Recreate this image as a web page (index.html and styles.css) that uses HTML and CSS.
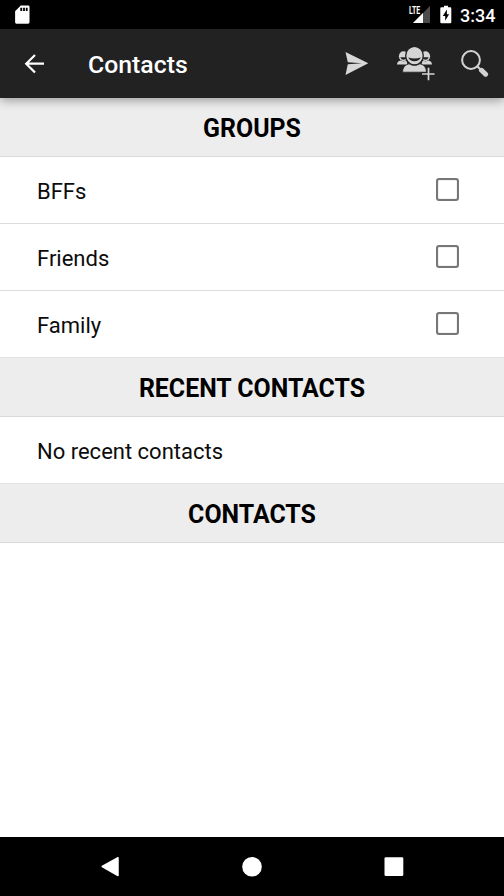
FILE: index.html
```html
<!DOCTYPE html>
<html lang="en">
<head>
<meta charset="utf-8">
<title>Contacts</title>
<link rel="stylesheet" href="styles.css">
</head>
<body>
<div class="screen">
  <div class="status">
    <svg class="sd" width="16" height="20" viewBox="0 0 16 20"><path fill="#fff" fill-rule="evenodd" d="M5.800 .5H13.200Q14.500 .5 14.500 1.800V17.300Q14.500 18.700 13.200 18.700H1.400Q.1 18.700 .1 17.300V6.200ZM5.300 2.800V6H7.200V2.800ZM8.100 2.800V6H9.900V2.800ZM10.800 2.800V6H12.600V2.800Z"/></svg>
    <div class="signal">
      <svg width="22" height="20" viewBox="0 0 22 20"><path fill="#4d4d4d" d="M21 1V18H4Z"/><path fill="#fff" d="M14 8V18H4Z"/></svg>
      <span class="lte">LTE</span>
    </div>
    <svg class="battery" width="12" height="19" viewBox="0 0 12 19"><path fill="#fff" d="M4 .7H8V2.300H10.200Q11.300 2.300 11.300 3.400V17.200Q11.300 18.300 10.200 18.300H1.400Q.3 18.300 .3 17.200V3.400Q.3 2.300 1.400 2.300H4Z"/><path d="M6.900 4.600L2.800 11H5.200V15.700L9.100 9.300H6.900Z"/></svg>
    <span class="time">3:34</span>
  </div>
  <header class="toolbar">
    <svg class="back" width="22" height="22" viewBox="0 0 22 22"><path fill="none" stroke="#fff" stroke-width="2.200" d="M20 10.700H2.500M11 2L2.200 10.700L11 19.500"/></svg>
    <h1>Contacts</h1>
    <svg class="send" width="24" height="24" viewBox="0 0 24 24"><path fill="#d8d8d8" d="M.5 0L23.300 11.300L.5 23L2.800 12.200L17 11.300L2.800 10.300Z"/></svg>
    <svg class="people" width="40" height="36" viewBox="0 0 40 36">
      <g fill="#d5d5d5">
        <ellipse cx="7.500" cy="10.200" rx="4.600" ry="5"/><ellipse cx="29.500" cy="10.200" rx="4.600" ry="5"/>
        <path d="M1 18.500Q1.200 15.200 4.600 14.600Q7.500 16.200 10.400 14.600L11.500 18.500ZM36 18.500Q35.800 15.200 32.400 14.600Q29.500 16.200 26.600 14.600L25.500 18.500Z"/>
      </g>
      <path fill="#222" d="M4.300 11.300H10.700Q9.800 13.800 7.500 13.800T4.300 11.300ZM26.300 11.300H32.700Q31.800 13.800 29.500 13.800T26.300 11.300Z"/>
      <ellipse cx="18.500" cy="9.700" rx="8.800" ry="9.300" fill="#d5d5d5" stroke="#222" stroke-width="1.300"/>
      <path fill="#222" d="M12.200 11.600Q18.500 13.400 24.800 11.600Q23.200 15.200 18.500 15.200T12.200 11.600Z"/>
      <path fill="#d5d5d5" stroke="#222" stroke-width=".8" d="M6.500 26.200Q6.700 19.300 13 17.800Q18.500 21.200 24 17.800Q30.300 19.300 30.500 26.200Z"/>
      <path stroke="#222" stroke-width="4" d="M25 28H38.500M32.500 21V34"/>
      <path stroke="#d5d5d5" stroke-width="1.700" d="M26 28H38.500M32.500 21.700V34.300"/>
    </svg>
    <svg class="search" width="28" height="28" viewBox="0 0 28 28"><circle cx="10" cy="10" r="8.900" fill="none" stroke="#d2d2d2" stroke-width="2"/><path stroke="#d2d2d2" stroke-width="2.200" d="M16 16L20 20"/><path stroke="#d2d2d2" stroke-width="5" stroke-linecap="round" d="M20.500 20.300L24.600 24.200"/></svg>
  </header>
  <main>
    <h2 class="first">GROUPS</h2>
    <label class="row">BFFs<input type="checkbox"></label>
    <label class="row">Friends<input type="checkbox"></label>
    <label class="row last">Family<input type="checkbox"></label>
    <h2>RECENT CONTACTS</h2>
    <div class="row last">No recent contacts</div>
    <h2>CONTACTS</h2>
  </main>
  <nav>
    <svg width="20" height="22" viewBox="0 0 20 22"><path fill="#fff" stroke="#fff" stroke-width="1.500" stroke-linejoin="round" d="M18 1.700V19.500L2.200 10.500Z"/></svg>
    <svg width="20" height="20" viewBox="0 0 20 20"><circle cx="10" cy="9.800" r="9.800" fill="#fff"/></svg>
    <svg width="20" height="20" viewBox="0 0 20 20"><rect x=".5" y=".3" width="18.800" height="18.800" rx="1.300" fill="#fff"/></svg>
  </nav>
</div>
</body>
</html>
```
FILE: styles.css
```css
* { box-sizing: border-box; }
body { margin: 0; background: #fff; font-family: Roboto, sans-serif; color: #0c0c0c; }
.screen { width: 504px; height: 896px; display: flex; flex-direction: column; overflow: hidden; }
.status { height: 29px; flex: none; background: #000; color: #fff; display: flex; align-items: flex-start; padding: 5px 10px 0 15px; }
.signal { position: relative; margin-left: auto; width: 22px; height: 20px; }
.lte { position: absolute; left: 0; top: 0; font-size: 10.500px; line-height: 11px; font-weight: 700; transform: scaleX(.66); transform-origin: left; }
.battery { margin-left: 9px; }
.time { margin-left: 8px; width: 34px; font-size: 18px; line-height: 21px; font-weight: 500; white-space: nowrap; }
.toolbar { height: 69px; flex: none; background: #222; display: flex; align-items: center; padding: 0 15px 0 24px; box-shadow: 0 2px 10px rgba(0, 0, 0, .38); position: relative; }
h1 { margin: 2px auto 0 42px; color: #fff; font-size: 24.800px; line-height: 30px; font-weight: 500; }
.send { margin-right: 27px; }
.people { margin: 0 25px 0 0; }
main { flex: 1; }
h2 { margin: 0; height: 60px; padding-top: 1px; background: #ededed; border-top: 1px solid #e2e2e2; border-bottom: 1px solid #d9d9d9; text-align: center; font-size: 24.900px; line-height: 60px; font-weight: 700; color: #000; }
.first { height: 59px; border-top: 0; }
.row { height: 67px; display: flex; align-items: center; justify-content: space-between; padding: 3px 45px 0 37px; border-bottom: 1px solid #dcdcdc; font-size: 22px; }
.last { height: 66px; border-bottom: 0; }
input { appearance: none; margin: -5px 0 0; width: 23px; height: 23px; border: 2px solid #777; border-radius: 3px; box-shadow: inset 0 0 1px #777; }
nav { height: 59px; flex: none; background: #000; display: flex; align-items: center; justify-content: space-between; padding: 0 100px; }
```
